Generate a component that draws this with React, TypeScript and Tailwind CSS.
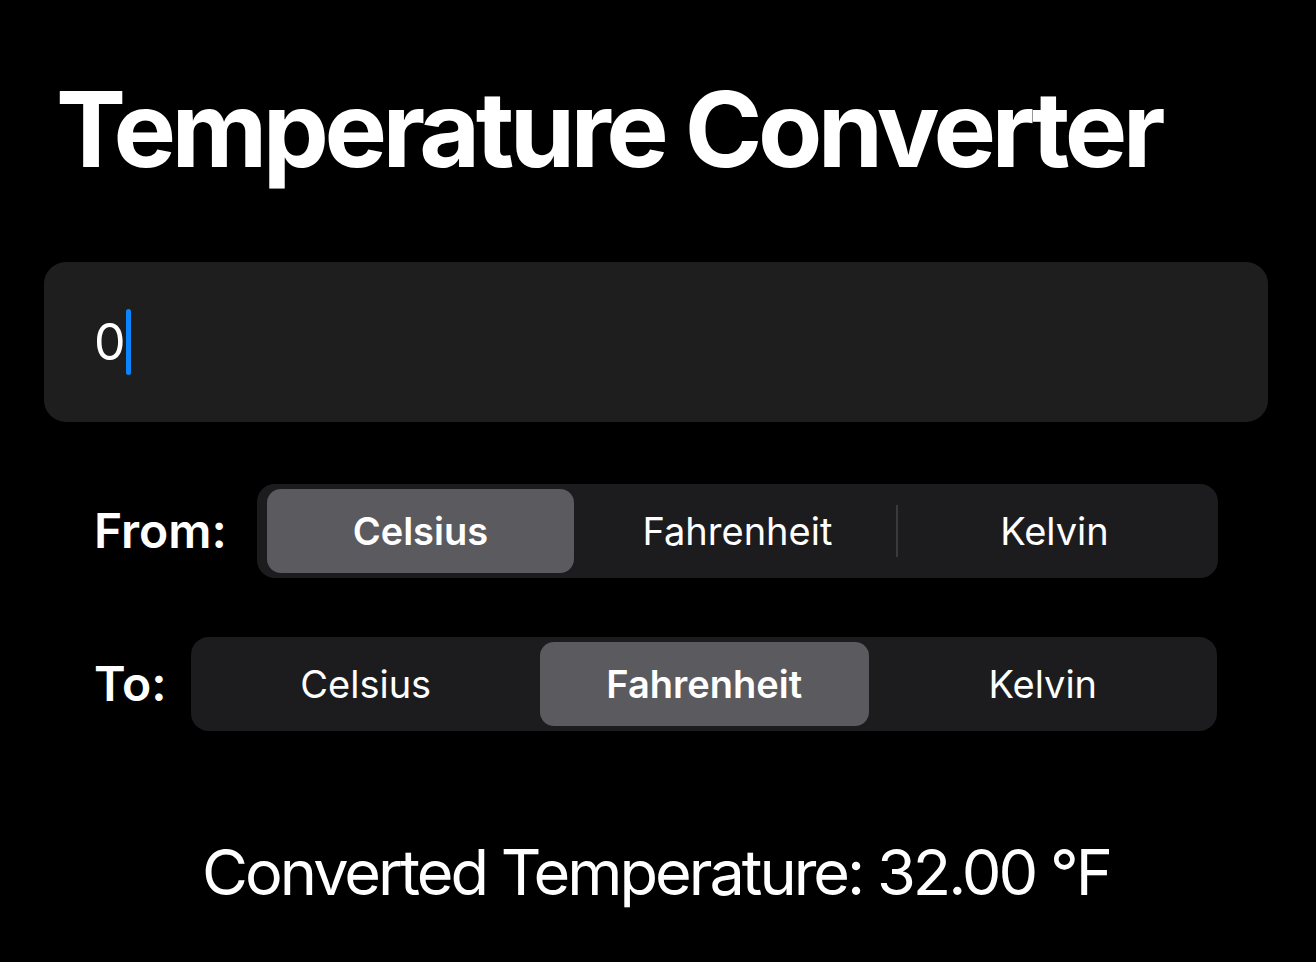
import React, { useState } from 'react';

const units = ['Celsius', 'Fahrenheit', 'Kelvin'] as const;
type Unit = (typeof units)[number];

const Segmented: React.FC<{ value: Unit; onChange: (u: Unit) => void }> = ({ value, onChange }) => {
  const idx = units.indexOf(value);
  return (
    <div className="flex-1 h-[94px] rounded-[18px] bg-[#1c1c1e] p-[5px] flex items-stretch">
      {units.map((u, i) => {
        const selected = u === value;
        // separator shows only between two unselected segments
        const showSep = i > 0 && i !== idx && i - 1 !== idx;
        return (
          <div key={u} className="flex-1 flex items-center relative">
            {showSep && <div className="absolute left-0 top-[16px] bottom-[16px] w-[2px] bg-[#3a3a3c]" />}
            <button
              onClick={() => onChange(u)}
              className={`h-full rounded-[14px] text-[38px] text-white ${
                selected ? 'w-[calc(100%-10px)] mx-auto bg-[#5b5b5f] font-semibold' : 'w-full font-normal'
              }`}
            >
              {u}
            </button>
          </div>
        );
      })}
    </div>
  );
};

export default function App() {
  const [input] = useState('0');
  const [from, setFrom] = useState<Unit>('Celsius');
  const [to, setTo] = useState<Unit>('Fahrenheit');

  const convert = (v: number) => {
    let c = v;
    if (from === 'Fahrenheit') c = (v - 32) * (5 / 9);
    if (from === 'Kelvin') c = v - 273.15;
    if (to === 'Fahrenheit') return c * (9 / 5) + 32;
    if (to === 'Kelvin') return c + 273.15;
    return c;
  };
  const symbol = to === 'Celsius' ? '°C' : to === 'Fahrenheit' ? '°F' : 'K';
  const result = convert(parseFloat(input) || 0).toFixed(2);

  return (
    <div className="min-h-screen w-full bg-black text-white pl-[44px] pr-[48px] pt-[76px]" style={{ fontFamily: 'Inter, "Noto Sans", sans-serif' }}>
      <h1 className="text-[105px] h-[106px] leading-none font-bold pl-[12px] tracking-[-4.5px] whitespace-nowrap">Temperature Converter</h1>

      <div className="mt-[80px] h-[160px] rounded-[22px] bg-[#1e1e1e] flex items-center px-[50px]">
        <span className="text-[50px] leading-none font-normal">{input}</span>
        <span className="w-[5px] h-[66px] rounded-full bg-[#0a84ff]" />
      </div>

      <div className="mt-[62px] flex items-center gap-[30px] px-[50px]">
        <span className="text-[48px] font-semibold">From:</span>
        <Segmented value={from} onChange={setFrom} />
      </div>

      <div className="mt-[59px] flex items-center gap-[25px] pl-[50px] pr-[51px]">
        <span className="text-[48px] font-semibold">To:</span>
        <Segmented value={to} onChange={setTo} />
      </div>

      <p className="mt-[110px] text-center text-[63px] leading-none font-normal tracking-[-3px]">
        Converted Temperature: {result} {symbol}
      </p>
    </div>
  );
}
